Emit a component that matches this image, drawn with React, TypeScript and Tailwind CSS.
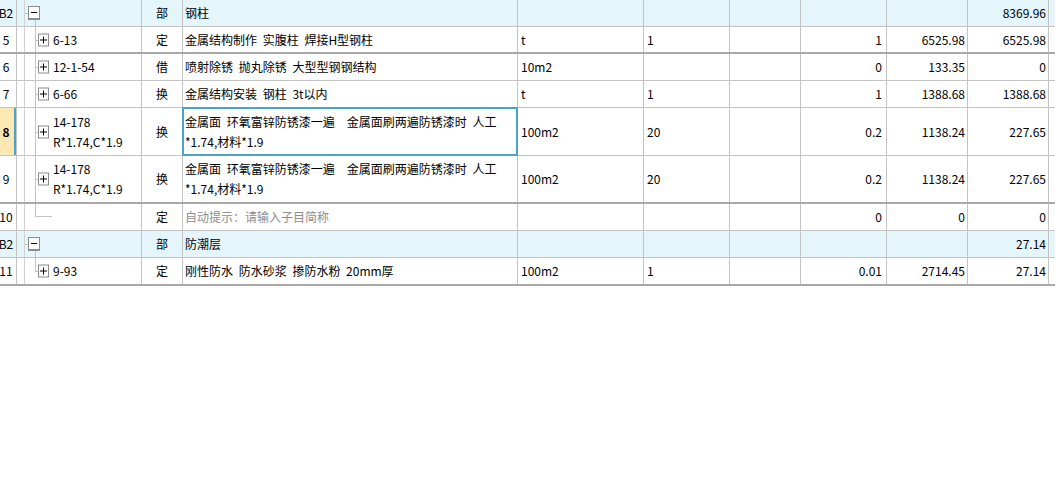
import React from "react";
import clsx from "clsx";

type Row = {
	rn: string;
	kind: "group" | "item" | "hint";
	code?: string[];
	type: string;
	name: string[];
	unit?: string;
	c6?: string;
	qty?: string;
	price?: string;
	total?: string;
	h: string;
	thick?: boolean;
	selected?: boolean;
	last?: boolean;
};

const rows: Row[] = [
	{ rn: "B2", kind: "group", type: "部", name: ["钢柱"], total: "8369.96", h: "h-[27px]" },
	{
		rn: "5",
		kind: "item",
		code: ["6-13"],
		type: "定",
		name: ["金属结构制作 实腹柱 焊接H型钢柱"],
		unit: "t",
		c6: "1",
		qty: "1",
		price: "6525.98",
		total: "6525.98",
		h: "h-[27px]",
		thick: true,
	},
	{
		rn: "6",
		kind: "item",
		code: ["12-1-54"],
		type: "借",
		name: ["喷射除锈 抛丸除锈 大型型钢钢结构"],
		unit: "10m2",
		qty: "0",
		price: "133.35",
		total: "0",
		h: "h-[27px]",
	},
	{
		rn: "7",
		kind: "item",
		code: ["6-66"],
		type: "换",
		name: ["金属结构安装 钢柱 3t以内"],
		unit: "t",
		c6: "1",
		qty: "1",
		price: "1388.68",
		total: "1388.68",
		h: "h-[27px]",
	},
	{
		rn: "8",
		kind: "item",
		code: ["14-178", "R*1.74,C*1.9"],
		type: "换",
		name: ["金属面 环氧富锌防锈漆一遍\u3000金属面刷两遍防锈漆时 人工", "*1.74,材料*1.9"],
		unit: "100m2",
		c6: "20",
		qty: "0.2",
		price: "1138.24",
		total: "227.65",
		h: "h-[48px]",
		selected: true,
	},
	{
		rn: "9",
		kind: "item",
		code: ["14-178", "R*1.74,C*1.9"],
		type: "换",
		name: ["金属面 环氧富锌防锈漆一遍\u3000金属面刷两遍防锈漆时 人工", "*1.74,材料*1.9"],
		unit: "100m2",
		c6: "20",
		qty: "0.2",
		price: "1138.24",
		total: "227.65",
		h: "h-[48px]",
		thick: true,
	},
	{
		rn: "10",
		kind: "hint",
		type: "定",
		name: ["自动提示：请输入子目简称"],
		qty: "0",
		price: "0",
		total: "0",
		h: "h-[27px]",
		last: true,
	},
	{ rn: "B2", kind: "group", type: "部", name: ["防潮层"], total: "27.14", h: "h-[27px]" },
	{
		rn: "11",
		kind: "item",
		code: ["9-93"],
		type: "定",
		name: ["刚性防水 防水砂浆 掺防水粉 20mm厚"],
		unit: "100m2",
		c6: "1",
		qty: "0.01",
		price: "2714.45",
		total: "27.14",
		h: "h-[28px]",
		thick: true,
		last: true,
	},
];

const cell = "shrink-0 border-r border-[#c4c4c4] flex items-center";

const Tree = ({ row }: { row: Row }) => {
	if (row.kind === "group") {
		return (
			<>
				<span className="absolute left-0 top-[13px] w-[3px] h-px bg-[#c4c4c4]" />
				<span className="absolute left-[3px] top-[6px] w-[12px] h-[14px] bg-white border border-[#8c8c8c] border-b-2">
					<span className="absolute left-[2px] right-[2px] top-[5px] h-px bg-black" />
				</span>
				<span className="absolute left-[10px] top-[20px] bottom-0 w-px bg-[#c4c4c4]" />
			</>
		);
	}
	if (row.kind === "hint") {
		return (
			<>
				<span className="absolute left-[10px] top-0 h-[12px] w-px bg-[#c4c4c4]" />
				<span className="absolute left-[10px] top-[12px] w-[17px] h-px bg-[#c4c4c4]" />
			</>
		);
	}
	return (
		<>
			<span
				className={clsx(
					"absolute left-[10px] top-0 w-px bg-[#c4c4c4]",
					row.last ? "h-1/2" : "bottom-0",
				)}
			/>
			<span className="absolute left-[10px] top-1/2 w-[3px] h-px bg-[#c4c4c4]" />
			<span className="absolute left-[13px] top-1/2 -translate-y-1/2 w-[11px] h-[13px] bg-white border border-[#8c8c8c]">
				<span className="absolute left-[1px] right-[1px] top-[5px] h-px bg-black" />
				<span className="absolute top-[2px] bottom-[2px] left-[4px] w-px bg-black" />
			</span>
		</>
	);
};

const App = () => {
	return (
		<div className="w-[1055px] h-[500px] bg-white text-black text-[12px] leading-[20px] [word-spacing:3px] font-['Noto_Sans_CJK_SC','Liberation_Sans',sans-serif] overflow-hidden">
			{rows.map((r, i) => (
				<div
					key={i}
					className={clsx(
						"flex",
						r.h,
						r.thick ? "border-b-2 border-[#a8a8a8]" : "border-b border-[#c4c4c4]",
						r.kind === "group" ? "bg-[#e4f5fb]" : "bg-white",
					)}
				>
					<div
						className={clsx(
							cell,
							"w-[17px] overflow-hidden",
							r.selected && "bg-[#fce8b2] shadow-[inset_-2px_0_0_#4aa3c8] font-bold",
						)}
					>
						<div className="w-[12px] flex justify-center whitespace-nowrap">{r.rn}</div>
					</div>
					<div className="shrink-0 w-[8px] border-r border-[#d2d2d2]" />
					<div className={clsx(cell, "w-[117px] relative pl-[28px]")}>
						<Tree row={r} />
						{r.code && (
							<div className="whitespace-nowrap">
								{r.code.map((c) => (
									<div key={c}>{c}</div>
								))}
							</div>
						)}
					</div>
					<div className={clsx(cell, "w-[41px] justify-center")}>{r.type}</div>
					<div
						className={clsx(
							cell,
							"w-[335px] relative pl-[2px]",
							r.kind === "hint" && "text-[#8e8e8e]",
						)}
					>
						<div className="whitespace-nowrap">
							{r.name.map((n) => (
								<div key={n}>{n}</div>
							))}
						</div>
						{r.selected && (
							<div className="absolute -inset-px border-2 border-[#4aa3c8] pointer-events-none" />
						)}
					</div>
					<div className={clsx(cell, "w-[126px] pl-[3px]")}>{r.unit}</div>
					<div className={clsx(cell, "w-[86px] pl-[3px]")}>{r.c6}</div>
					<div className={clsx(cell, "w-[71px]")} />
					<div className={clsx(cell, "w-[86px] justify-end pr-[4px]")}>{r.qty}</div>
					<div className={clsx(cell, "w-[81px] justify-end pr-[2px]")}>{r.price}</div>
					<div className={clsx(cell, "w-[81px] justify-end pr-[2px]")}>{r.total}</div>
					<div className="flex-1" />
				</div>
			))}
		</div>
	);
};

export default App;
